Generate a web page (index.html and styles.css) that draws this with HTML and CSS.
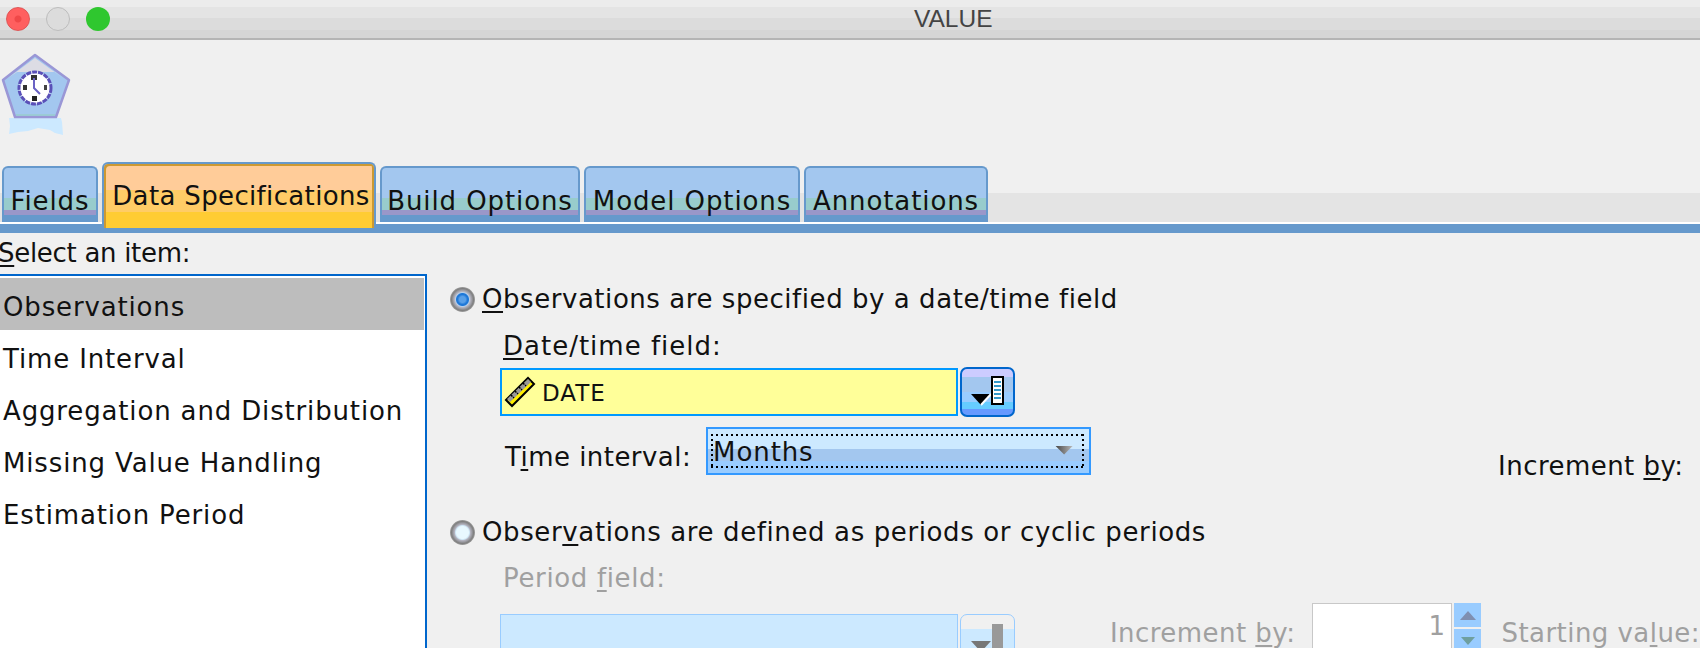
FILE: index.html
```html
<!DOCTYPE html>
<html lang="en">
<head>
    <meta charset="UTF-8">
    <title>VALUE</title>
    <link rel="stylesheet" href="styles.css">
</head>
<body>
    <div class="titlebar">
        <span class="light light-close"></span>
        <span class="light light-min"></span>
        <span class="light light-max"></span>
        <span class="title">VALUE</span>
    </div>
    <div class="node-area">
        <svg class="node-icon" width="72" height="88" viewBox="0 0 72 88">
            <path d="M8 66h52l1 4 1 13-8-2-5-3-12-2-10 3-10 1-9 2 1-8z" fill="#cce9ff"/>
            <path d="M34 3 68 28 55 65H14L2 28z" fill="#a3c7ef" stroke="#9a97d6" stroke-width="2.5" stroke-linejoin="round"/>
            <path d="M34 6 62 26 54 20H16L7 26z" fill="#dcdce4"/>
            <path d="M15 63H54" stroke="#98cccc" stroke-width="1.5"/>
            <circle cx="34" cy="36" r="16" fill="#fff" stroke="#5a50b8" stroke-width="3" stroke-dasharray="5 1"/>
            <rect x="30" y="23" width="6" height="5" fill="#333"/>
            <rect x="31" y="44" width="5" height="5" fill="#222"/>
            <rect x="22" y="33" width="4" height="5" fill="#333"/>
            <rect x="43" y="33" width="3" height="5" fill="#444"/>
            <path d="M33 26v10l6 6" fill="none" stroke="#6a62c4" stroke-width="2"/>
        </svg>
    </div>
    <div class="tabs">
        <div class="tab tab-fields">Fields</div>
        <div class="tab tab-active">Data Specifications</div>
        <div class="tab tab-build">Build Options</div>
        <div class="tab tab-model">Model Options</div>
        <div class="tab tab-notes">Annotations</div>
    </div>
    <div class="tab-rule"></div>
    <div class="content">
        <div class="side">
            <div class="side-label"><u>S</u>elect an item:</div>
            <ul class="item-list">
                <li class="item item-selected">Observations</li>
                <li class="item">Time Interval</li>
                <li class="item">Aggregation and Distribution</li>
                <li class="item">Missing Value Handling</li>
                <li class="item">Estimation Period</li>
            </ul>
        </div>
        <div class="panel">
            <div class="radio-row">
                <span class="radio radio-on"></span>
                <span><u>O</u>bservations are specified by a date/time field</span>
            </div>
            <div class="field-label"><u>D</u>ate/time field:</div>
            <div class="field-row">
                <div class="field">
                    <svg width="32" height="32" viewBox="0 0 32 32">
                        <path d="M2 24 24 2l6 6L8 30z" fill="#ffee00" stroke="#000" stroke-width="2"/>
                        <path d="M3 23 24 3l3 3L6 26z" fill="#999"/>
                        <path d="M7 19l3 3M11 15l3 3M15 11l3 3M19 7l3 3" stroke="#000" stroke-width="1.5" stroke-dasharray="2 1"/>
                    </svg>
                    <span class="field-text">DATE</span>
                </div>
                <div class="pick-btn">
                    <svg width="38" height="32" viewBox="0 0 38 32">
                        <path d="M2 18h20l-10 11z" fill="#000"/>
                        <path d="M12 29l10-11" stroke="#fff" stroke-width="2"/>
                        <rect x="23" y="1" width="11" height="27" fill="#fff" stroke="#000" stroke-width="2"/>
                        <path d="M25 6h7M25 10h7M25 14h7M25 18h7M25 22h7" stroke="#3399cc" stroke-width="2"/>
                    </svg>
                </div>
            </div>
            <div class="interval-row">
                <span class="interval-label">T<u>i</u>me interval:</span>
                <div class="combo">
                    <span class="combo-text">Months</span>
                    <span class="combo-arrow"></span>
                </div>
                <span class="increment-top">Increment <u>b</u>y:</span>
            </div>
            <div class="radio-row radio-row-second">
                <span class="radio"></span>
                <span>Obser<u>v</u>ations are defined as periods or cyclic periods</span>
            </div>
            <div class="field-label field-label-off">Period <u>f</u>ield:</div>
            <div class="field-row field-row-off">
                <div class="field field-off"></div>
                <div class="pick-btn pick-btn-off">
                    <svg width="38" height="32" viewBox="0 0 38 32">
                        <path d="M2 18h20l-10 11z" fill="#777"/>
                        <rect x="23" y="1" width="11" height="31" fill="#999"/>
                    </svg>
                </div>
                <div class="cycle-fields">
                    <span class="off-label">Increment <u>b</u>y:</span>
                    <div class="spinner">
                        <div class="spin-input">1</div>
                        <div class="spin-arrows">
                            <span class="spin-up"></span>
                            <span class="spin-down"></span>
                        </div>
                    </div>
                    <span class="off-label">Starting va<u>l</u>ue:</span>
                </div>
            </div>
        </div>
    </div>
</body>
</html>
```

FILE: styles.css
```css
html, body {
    margin: 0;
    padding: 0;
    height: 648px;
    overflow: hidden;
}

body {
    width: 1700px;
    background-color: #f0f0f0;
    color: #111;
    font-family: 'DejaVu Sans', sans-serif;
    font-size: 26px;
}

u {
    text-underline-offset: 3px;
    text-decoration-thickness: 2px;
}

.titlebar {
    display: flex;
    align-items: center;
    box-sizing: border-box;
    height: 40px;
    padding-left: 6px;
    gap: 16px;
    border-bottom: 2px solid #b4b4b4;
    background: linear-gradient(#ececec 0 7px, #e4e4e4 7px 18px, #dcdcdc 18px 30px, #d5d5d5 30px);
}

.light {
    width: 24px;
    height: 24px;
    box-sizing: border-box;
    border-radius: 50%;
}

.light-close {
    background: radial-gradient(circle, #f04848 0 3px, #ff5f5f 4px);
    border: 1px solid #e05555;
}

.light-min {
    background-color: #dcdcdc;
    border: 1px solid #bdbdbd;
}

.light-max {
    background-color: #2fc72f;
}

.title {
    margin-left: 788px;
    color: #444;
    font-family: 'Liberation Sans', sans-serif;
    font-size: 24.5px;
}

.node-area {
    box-sizing: border-box;
    height: 122px;
    padding-top: 12px;
}

.node-icon {
    display: block;
    margin-left: 1px;
}

.tabs {
    display: flex;
    align-items: flex-end;
    height: 62px;
    padding-left: 2px;
    gap: 4px;
    background: linear-gradient(#f0f0f0 0 31px, #e4e4e4 31px 60px, #fff 60px);
}

.tab {
    box-sizing: border-box;
    height: 56px;
    margin-bottom: 2px;
    padding-top: 18px;
    border: 2px solid #6699cc;
    border-bottom: none;
    border-radius: 6px 6px 0 0;
    background: linear-gradient(#a3c7ef 0 30px, #98cccc 30px 42px, #9a97c9 42px 47px, #6699cc 47px);
    text-align: center;
    line-height: 30px;
    letter-spacing: 0.9px;
    white-space: nowrap;
}

.tab-fields {
    width: 96px;
}

.tab-active {
    position: relative;
    z-index: 1;
    width: 274px;
    height: 66px;
    margin-bottom: -4px;
    padding-top: 17px;
    padding-left: 4px;
    border-bottom: none;
    box-shadow: inset 2px 2px 0 #cc9933, inset -2px 0 0 #cc9933;
    background: linear-gradient(#ffcc99 0 26px, #ffcc66 26px 48px, #ffcc33 48px);
    letter-spacing: 0.35px;
}

.tab-build {
    width: 200px;
}

.tab-model {
    width: 216px;
}

.tab-notes {
    width: 184px;
}

.tab-rule {
    height: 9px;
    background-color: #6699cc;
}

.content {
    display: flex;
    height: 415px;
}

.side {
    flex: none;
    width: 427px;
}

.side-label {
    height: 41px;
    margin-left: -2px;
    line-height: 40px;
    letter-spacing: -0.3px;
}

.item-list {
    margin: 0;
    padding: 2px 1px 0 0;
    height: 400px;
    border-top: 2px solid #0066cc;
    border-right: 2px solid #0066cc;
    background-color: #fff;
    list-style: none;
}

.item {
    height: 52px;
    padding-left: 3px;
    line-height: 58px;
    letter-spacing: 0.85px;
    white-space: nowrap;
}

.item-selected {
    background-color: #bdbdbd;
}

.panel {
    flex: 1;
    min-width: 0;
    padding-left: 23px;
}

.radio-row {
    display: flex;
    align-items: center;
    gap: 7px;
    height: 30px;
    margin-top: 51px;
    letter-spacing: 0.55px;
    white-space: nowrap;
}

.radio-row-second {
    margin-top: 42px;
    letter-spacing: 0.62px;
}

.radio {
    flex: none;
    width: 25px;
    height: 25px;
    border-radius: 50%;
    background: radial-gradient(circle, #e8f8ff 0 6px, #cfe6f5 7px, #b4b4c0 8px, #7f7f7f 11px, #a0a0a0 12.5px);
}

.radio-on {
    background: radial-gradient(circle, #5aa0e8 0 3px, #1f78d8 5px 6px, #b8d0ea 7px, #b4b4c0 8px, #7f7f7f 11px, #a0a0a0 12.5px);
}

.field-label {
    height: 30px;
    margin-top: 17px;
    margin-left: 53px;
    line-height: 30px;
    letter-spacing: 1px;
}

.field-label-off {
    margin-top: 16px;
    color: #a0a0a0;
    letter-spacing: 0.65px;
}

.field-row {
    display: flex;
    align-items: center;
    gap: 2px;
    height: 50px;
    margin-top: 6px;
    margin-left: 50px;
}

.field-row-off {
    align-items: flex-start;
    margin-top: 21px;
    height: 60px;
}

.field {
    display: flex;
    align-items: center;
    gap: 6px;
    box-sizing: border-box;
    width: 458px;
    height: 48px;
    padding-left: 2px;
    border: 2px solid #0099ff;
    background-color: #ffff99;
    font-size: 23px;
    letter-spacing: 1px;
}

.field-text {
    padding-top: 2px;
}

.field-off {
    border: 1px solid #99ccff;
    background-color: #cce9ff;
}

.pick-btn {
    display: flex;
    align-items: center;
    justify-content: center;
    flex: none;
    box-sizing: border-box;
    width: 55px;
    height: 50px;
    border: 2px solid #0066cc;
    border-radius: 7px;
    background: linear-gradient(#ccccff 0 8px, #a3c7ef 8px 23px, #99ccff 23px 33px, #66ccff 33px 40px, #6699ff 40px);
}

.pick-btn-off {
    border: 1px solid #99ccff;
    background: linear-gradient(#f0f0f0 0 14px, #cce9ff 14px);
}

.interval-row {
    display: flex;
    align-items: flex-start;
    height: 48px;
    margin-top: 10px;
    margin-left: 55px;
    white-space: nowrap;
}

.interval-label {
    margin-top: 14px;
    line-height: 32px;
    letter-spacing: 0.45px;
}

.combo {
    position: relative;
    display: flex;
    align-items: center;
    justify-content: space-between;
    box-sizing: border-box;
    width: 385px;
    height: 48px;
    margin-left: 15px;
    padding: 2px 16px 0 5px;
    border: 2px solid #3399ff;
    background: linear-gradient(#cce9ff 0 20px, #a3c7ef 20px 32px, #99ccff 32px);
    letter-spacing: 0.9px;
}

/* focus ring, drawn over the combo */
.combo::before {
    content: "";
    position: absolute;
    inset: 5px 5px 5px 3px;
    background:
        repeating-linear-gradient(90deg, #000 0 2px, transparent 2px 5px) left top / 100% 2px no-repeat,
        repeating-linear-gradient(90deg, #000 0 2px, transparent 2px 5px) left bottom / 100% 2px no-repeat,
        repeating-linear-gradient(#000 0 2px, transparent 2px 5px) left top / 2px 100% no-repeat,
        repeating-linear-gradient(#000 0 2px, transparent 2px 5px) right top / 2px 100% no-repeat;
}

.combo-arrow {
    width: 18px;
    height: 9px;
    margin-bottom: 4px;
    background: linear-gradient(90deg, #444, #bbb);
    clip-path: polygon(0 0, 100% 0, 50% 100%);
}

.increment-top {
    margin-top: 23px;
    margin-left: 407px;
    line-height: 32px;
    letter-spacing: 0.45px;
}

.cycle-fields {
    display: flex;
    align-items: flex-start;
    margin-left: 93px;
    margin-top: -11px;
    color: #a0a0a0;
    letter-spacing: 0.45px;
    white-space: nowrap;
}

.off-label {
    margin-top: 14px;
    line-height: 32px;
}

.spinner {
    display: flex;
    gap: 2px;
    margin: 0 20px 0 17px;
}

.spin-input {
    box-sizing: border-box;
    width: 140px;
    height: 50px;
    padding: 0 6px 0 0;
    border: 1px solid #c8c8c8;
    background-color: #fff;
    text-align: right;
    line-height: 44px;
}

.spin-arrows {
    display: flex;
    flex-direction: column;
    gap: 2px;
    width: 27px;
}

.spin-up,
.spin-down {
    display: flex;
    align-items: center;
    justify-content: center;
    height: 24px;
    background-color: #99ccff;
}

.spin-up::before {
    content: "";
    border-left: 8px solid transparent;
    border-right: 8px solid transparent;
    border-bottom: 9px solid #7f8fb0;
}

.spin-down::before {
    content: "";
    border-left: 7px solid transparent;
    border-right: 7px solid transparent;
    border-top: 8px solid #6f9f9f;
}
```
